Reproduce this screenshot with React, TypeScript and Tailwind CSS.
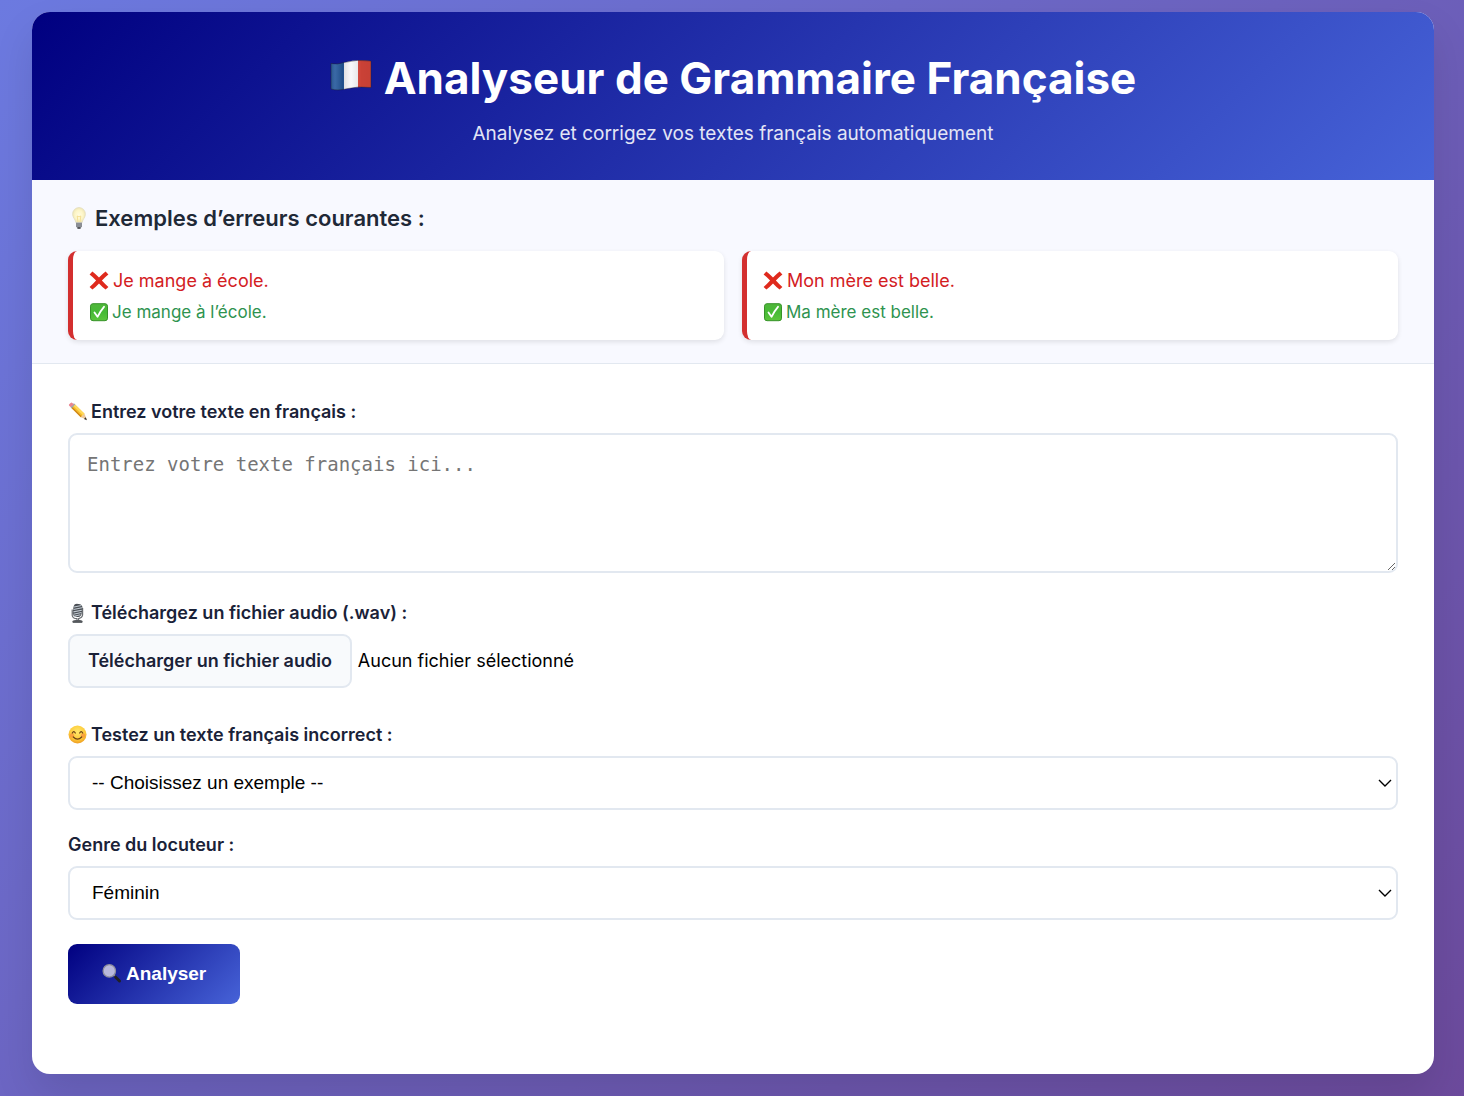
import type { ReactNode } from "react";

function Flag() {
  return (
    <svg viewBox="0 0 42 36" className="h-9 w-[42px] shrink-0" aria-hidden="true">
      <defs>
        <linearGradient id="wave" x1="0" x2="1" y1="0" y2="0">
          <stop offset="0" stopColor="#000" stopOpacity="0.15" />
          <stop offset="0.12" stopColor="#fff" stopOpacity="0.1" />
          <stop offset="0.3" stopColor="#000" stopOpacity="0.12" />
          <stop offset="0.5" stopColor="#fff" stopOpacity="0.1" />
          <stop offset="0.75" stopColor="#000" stopOpacity="0.1" />
          <stop offset="1" stopColor="#000" stopOpacity="0.12" />
        </linearGradient>
        <clipPath id="flagShape">
          <path d="M1 3.500Q7 5 14 2.500Q27 -1 41 1V27.500Q28 26 18 28.500Q8 31 1 29Z" />
        </clipPath>
      </defs>
      <g clipPath="url(#flagShape)">
        <path fill="#24589c" d="M0 0h14v32H0z" />
        <path fill="#f8f8fa" d="M14 0h14v32H14z" />
        <path fill="#e0483c" d="M28 0h14v32H28z" />
        <path fill="url(#wave)" d="M0 0h42v32H0z" />
      </g>
      <path d="M1 3.500Q7 5 14 2.500Q27 -1 41 1V27.500Q28 26 18 28.500Q8 31 1 29Z" fill="none" stroke="#222" strokeOpacity="0.4" />
    </svg>
  );
}

function Bulb() {
  return (
    <svg viewBox="0 0 22 24" className="h-6 w-[22px] shrink-0" aria-hidden="true">
      <defs>
        <radialGradient id="glass" cx="0.5" cy="0.5" r="0.55">
          <stop offset="0" stopColor="#fffbe0" />
          <stop offset="0.55" stopColor="#fdf6c8" />
          <stop offset="1" stopColor="#ece2b4" />
        </radialGradient>
      </defs>
      <path d="M11 1.500a6.500 6.500 0 0 0-6.400 6.700c0 3.400 2.600 4.800 3.200 8.300h6.400c.6-3.500 3.200-4.900 3.200-8.300A6.500 6.500 0 0 0 11 1.500Z" fill="url(#glass)" stroke="#ded8b7" strokeWidth="0.6" />
      <path d="m10 16-.8-6 1.800.8 1.800-.8-.8 6" fill="none" stroke="#f0d67c" strokeWidth="0.700" />
      <path d="M8 16.500h6v4l-1.500 2h-3L8 20.500Z" fill="#a2a5aa" />
      <path d="M8 18h6M8 20h6" stroke="#6b6f76" strokeWidth="0.8" />
      <path d="M9.500 22h3" stroke="#3c3e42" strokeWidth="1.400" />
    </svg>
  );
}

function Cross() {
  return (
    <svg viewBox="0 0 20 20" className="size-5 shrink-0" aria-hidden="true">
      <path d="M.6 3.400 3.400.600Q7 3.400 10 6.600Q13 3.400 16.600.600L19.400 3.400Q16 6 12.900 9.500Q16 13 19.400 15.900L16.600 18.600Q13 15.800 10 12.500Q7 15.800 3.400 18.600L.6 15.900Q4 13 7.100 9.500Q4 6 .6 3.400Z" fill="#df2a1d" />
    </svg>
  );
}

function Check() {
  return (
    <svg viewBox="0 0 20 20" className="size-5 shrink-0" aria-hidden="true">
      <defs>
        <linearGradient id="checkFill" x1="0" x2="0" y1="0" y2="1">
          <stop offset="0" stopColor="#4fb63a" />
          <stop offset="0.5" stopColor="#46ba35" />
          <stop offset="1" stopColor="#5cc63c" />
        </linearGradient>
      </defs>
      <rect x="1.500" y=".7" width="17" height="17" rx="2.500" fill="url(#checkFill)" stroke="#379329" />
      <path d="M5.500 9.500 8.500 13.800Q11 8.500 15 3.800" fill="none" stroke="#fff" strokeWidth="1.800" strokeLinecap="round" strokeLinejoin="round" />
    </svg>
  );
}

function Pencil() {
  return (
    <svg viewBox="0 0 20 20" className="size-5 shrink-0" aria-hidden="true">
      <path d="m3.200 5.800 3.600-3.600 9.700 9.500-3.700 3.600Z" fill="#f6bd2c" />
      <path d="m5.200 3.800 1.600-1.600 9.700 9.500-1.600 1.600Z" fill="#ffd95a" />
      <path d="m3.200 5.800 1-1 9.600 9.600-1 .9Z" fill="#cf8518" />
      <path d="m16.500 11.700 2.300 6-6-2.400Z" fill="#edc99b" />
      <path d="m17.800 15.200 1.100 3-3-1.200Z" fill="#33302f" />
      <path d="m2.300 4.900 3.600-3.600 1.300 1.300-3.600 3.600Z" fill="#9aa8b1" />
      <path d="M2.500 5.100 1.200 3.800Q.4 3 1.200 2.200L2.600.900q.9-.8 1.700 0L6 2.500Z" fill="#ea8590" />
    </svg>
  );
}

function Mic() {
  return (
    <svg viewBox="0 0 20 20" className="size-5 shrink-0" aria-hidden="true">
      <path d="M4.200 6.500v6q.5 3 4.800 3.200v1.800l-3.600.8v1h8.200v-1.200l-3-.8v-1.600q3.600-.8 4-3.700V5" fill="none" stroke="#6b6f73" strokeWidth="1.200" />
      <path d="M4.500 18q5-2.200 10 0v1.300h-10Z" fill="#55585c" />
      <rect x="5" y="1" width="9" height="13" rx="4" fill="#4a4e54" transform="rotate(8 10 8)" />
      <path d="m6 4 7.500-1.500M5.500 6.500l8.500-1.700M5.400 8.900l8.400-1.700M5.400 11.200l8-1.700M6 13.200l6.500-1.400" stroke="#c2cbd3" strokeWidth="1.100" />
    </svg>
  );
}

function Smile() {
  return (
    <svg viewBox="0 0 20 20" className="size-5 shrink-0" aria-hidden="true">
      <defs>
        <radialGradient id="face" cx="0.5" cy="0.35" r="0.65">
          <stop offset="0" stopColor="#ffe86a" />
          <stop offset="0.65" stopColor="#fdcb3b" />
          <stop offset="1" stopColor="#ee9c22" />
        </radialGradient>
      </defs>
      <circle cx="9.500" cy="9.500" r="9" fill="url(#face)" />
      <circle cx="4" cy="10.500" r="2.200" fill="#f77f3e" fillOpacity="0.550" />
      <circle cx="15" cy="10.500" r="2.200" fill="#f77f3e" fillOpacity="0.550" />
      <path d="M4.300 8q1.500-2.600 3 0M11.700 8q1.500-2.600 3 0M5.300 12q4.200 4.200 8.400 0" fill="none" stroke="#6b4117" strokeWidth="1.200" strokeLinecap="round" />
    </svg>
  );
}

function Magnifier() {
  return (
    <svg viewBox="0 0 20 20" className="size-5 shrink-0" aria-hidden="true">
      <path d="m11 10.500 3 3" stroke="#8d8d96" strokeWidth="1.600" />
      <path d="m13.500 13 4 4" stroke="#202024" strokeWidth="3" strokeLinecap="round" />
      <circle cx="7.300" cy="6.900" r="6.200" fill="#b9b8dc" stroke="#8f8f9c" strokeWidth="1.300" />
    </svg>
  );
}

function Example({ wrong, right }: { wrong: string; right: string }) {
  return (
    <li className="rounded-[9px] border-l-[5px] border-[#d32f2f] bg-white px-4 pt-4 pb-[13px] shadow-[0_2px_5px_rgba(0,0,0,0.1)]">
      <p className="flex h-7 items-center gap-1 text-lg text-[#d3201f]">
        <Cross />
        <span>{wrong}</span>
      </p>
      <p className="mt-1 flex h-7 items-center gap-[3px] text-[17px] text-[#2e934f]">
        <Check />
        <span>{right}</span>
      </p>
    </li>
  );
}

function FieldLabel({ htmlFor, icon, children }: { htmlFor: string; icon?: ReactNode; children: ReactNode }) {
  return (
    <label htmlFor={htmlFor} className="flex h-7 items-center gap-[3px] text-lg font-semibold text-[#1a2238]">
      {icon}
      <span>{children}</span>
    </label>
  );
}

function SelectBox({ id, options }: { id: string; options: string[] }) {
  return (
    <div className="relative mt-[7px]">
      <select
        id={id}
        className="block h-[54px] w-full appearance-none rounded-[9px] border-2 border-[#e2e8f0] bg-white px-[22px] font-['Liberation_Sans',Arial,sans-serif] text-[19px] text-black"
      >
        {options.map((option) => (
          <option key={option}>{option}</option>
        ))}
      </select>
      <svg viewBox="0 0 14 8" className="pointer-events-none absolute top-[23px] right-1.5 h-2 w-3.5" aria-hidden="true">
        <path d="m1 1 6 6 6-6" fill="none" stroke="#000" strokeWidth="1.400" />
      </svg>
    </div>
  );
}

export default function App() {
  return (
    <div className="min-h-screen bg-[linear-gradient(135deg,#6c7ae0,#6c4a9c)] pt-3 pr-[30px] pb-[21px] pl-8 font-['Inter',sans-serif]">
      <main className="overflow-hidden rounded-[18px] bg-white shadow-[0_20px_40px_rgba(0,0,0,0.1)]">
        <header className="bg-[linear-gradient(135deg,#000080,#4763d8)] px-9 pt-9 pb-8 text-center text-white">
          <h1 className="flex items-center justify-center gap-3 text-[44px] leading-[60px] font-bold">
            <Flag />
            <span>Analyseur de Grammaire Française</span>
          </h1>
          <p className="mt-3 text-[19px] leading-7 text-[#e3e5f5]">Analysez et corrigez vos textes français automatiquement</p>
        </header>

        <section className="border-b border-[#e2e8f0] bg-[#f8f9ff] px-9 pt-6 pb-[23px]">
          <h2 className="flex h-7 items-center gap-[5px] text-[22px] font-semibold text-[#1f2937]">
            <Bulb />
            <span>Exemples d’erreurs courantes :</span>
          </h2>
          <ul className="mt-[19px] grid grid-cols-2 gap-[18px]">
            <Example wrong="Je mange à école." right="Je mange à l’école." />
            <Example wrong="Mon mère est belle." right="Ma mère est belle." />
          </ul>
        </section>

        <form className="px-9 pt-[34px] pb-[70px]" onSubmit={(event) => event.preventDefault()}>
          <FieldLabel htmlFor="texte" icon={<Pencil />}>Entrez votre texte en français :</FieldLabel>
          <textarea
            id="texte"
            placeholder="Entrez votre texte français ici..."
            className="mt-[7px] block h-[140px] w-full resize-y rounded-[9px] border-2 border-[#e2e8f0] px-[17px] py-[15px] font-['DejaVu_Sans_Mono',monospace] text-[19px] leading-7 placeholder:text-[#757575]"
          />

          <div className="mt-[26px]">
            <FieldLabel htmlFor="audio" icon={<Mic />}>Téléchargez un fichier audio (.wav) :</FieldLabel>
            <div className="mt-[7px] flex items-center gap-1.5 text-lg text-black">
              <input id="audio" type="file" accept=".wav" className="sr-only" />
              <label
                htmlFor="audio"
                className="flex h-[54px] cursor-pointer items-center rounded-[9px] border-2 border-[#e2e8f0] bg-[#f8fafc] px-[18px] font-semibold text-[#1a2238]"
              >
                Télécharger un fichier audio
              </label>
              <span>Aucun fichier sélectionné</span>
            </div>
          </div>

          <div className="mt-[33px]">
            <FieldLabel htmlFor="exemple" icon={<Smile />}>Testez un texte français incorrect :</FieldLabel>
            <SelectBox id="exemple" options={["-- Choisissez un exemple --", "Je mange à école.", "Mon mère est belle."]} />
          </div>

          <div className="mt-[21px]">
            <FieldLabel htmlFor="genre">Genre du locuteur :</FieldLabel>
            <SelectBox id="genre" options={["Féminin", "Masculin"]} />
          </div>

          <button
            type="submit"
            className="mt-6 flex h-[60px] items-center gap-1 rounded-[9px] bg-[linear-gradient(135deg,#000080,#4763d8)] px-[34px] font-['Liberation_Sans',Arial,sans-serif] text-[19px] font-bold text-white"
          >
            <Magnifier />
            <span>Analyser</span>
          </button>
        </form>
      </main>
    </div>
  );
}
